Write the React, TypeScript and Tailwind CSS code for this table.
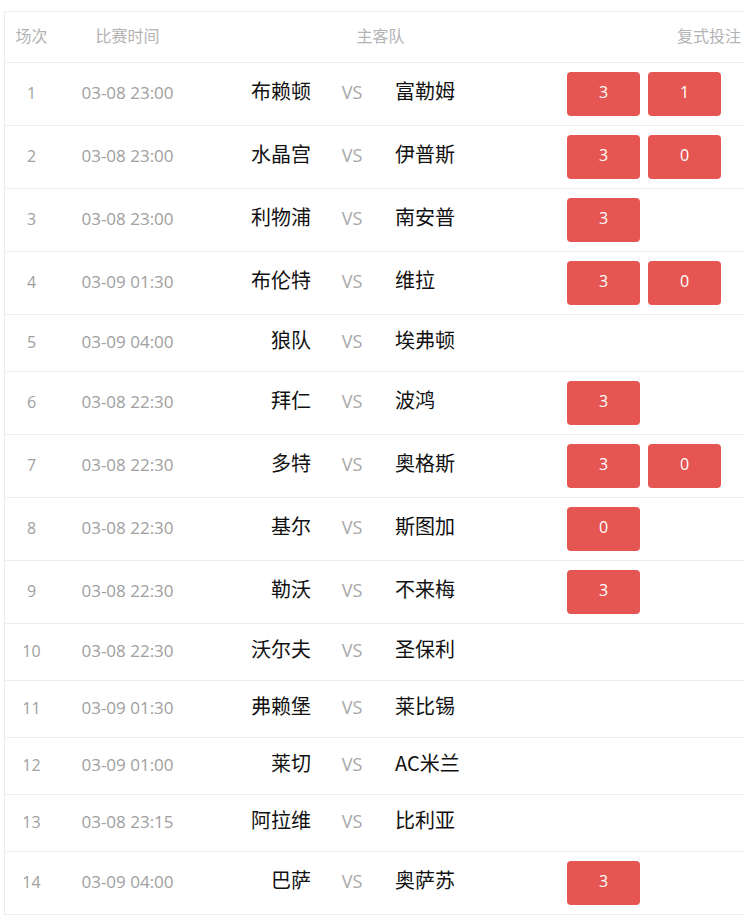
import React from "react";

type Match = { no: number; time: string; home: string; away: string; picks: string[] };

const MATCHES: Match[] = [
  { no: 1, time: "03-08 23:00", home: "布赖顿", away: "富勒姆", picks: ["3", "1"] },
  { no: 2, time: "03-08 23:00", home: "水晶宫", away: "伊普斯", picks: ["3", "0"] },
  { no: 3, time: "03-08 23:00", home: "利物浦", away: "南安普", picks: ["3"] },
  { no: 4, time: "03-09 01:30", home: "布伦特", away: "维拉", picks: ["3", "0"] },
  { no: 5, time: "03-09 04:00", home: "狼队", away: "埃弗顿", picks: [] },
  { no: 6, time: "03-08 22:30", home: "拜仁", away: "波鸿", picks: ["3"] },
  { no: 7, time: "03-08 22:30", home: "多特", away: "奥格斯", picks: ["3", "0"] },
  { no: 8, time: "03-08 22:30", home: "基尔", away: "斯图加", picks: ["0"] },
  { no: 9, time: "03-08 22:30", home: "勒沃", away: "不来梅", picks: ["3"] },
  { no: 10, time: "03-08 22:30", home: "沃尔夫", away: "圣保利", picks: [] },
  { no: 11, time: "03-09 01:30", home: "弗赖堡", away: "莱比锡", picks: [] },
  { no: 12, time: "03-09 01:00", home: "莱切", away: "AC米兰", picks: [] },
  { no: 13, time: "03-08 23:15", home: "阿拉维", away: "比利亚", picks: [] },
  { no: 14, time: "03-09 04:00", home: "巴萨", away: "奥萨苏", picks: ["3"] },
];

const latin = "font-['Open_Sans','Noto_Sans_CJK_SC',sans-serif]";
const cjk = "font-['Noto_Sans_CJK_SC','Noto_Sans',sans-serif]";

export default function App() {
  return (
    <div className="w-[745px] overflow-hidden bg-white pl-[4px] pt-[11px]">
      <div className="w-[858px] border border-[#ececec]">
        {/* header */}
        <div className={`flex h-[51px] items-center border-b border-[#ececec] pb-[4px] text-[16px] text-[#b3b3b3] ${cjk}`}>
          <div className="w-[53px] text-center">场次</div>
          <div className="w-[139px] text-center">比赛时间</div>
          <div className="w-[360px] pl-[7px] text-center">主客队</div>
          <div className="w-[304px] text-center">复式投注</div>
        </div>

        {MATCHES.map((m, i) => (
          <div
            key={m.no}
            className={`flex min-h-[57px] items-center ${i < MATCHES.length - 1 ? "border-b border-[#ececec]" : ""}`}
          >
            <div className={`w-[53px] pb-[2px] text-center text-[16px] text-[#a0a0a0] ${latin}`}>{m.no}</div>
            <div className={`w-[139px] pb-[2px] text-center text-[17px] text-[#a0a0a0] ${latin}`}>{m.time}</div>
            <div className={`w-[124px] pb-[6px] pr-[10px] text-right text-[20px] text-[#111] ${cjk}`}>{m.home}</div>
            <div className={`w-[62px] pb-[4px] text-center text-[18px] text-[#a8a8a8] ${latin}`}>VS</div>
            <div className={`w-[174px] pb-[6px] pl-[12px] text-left text-[20px] text-[#111] ${cjk}`}>{m.away}</div>
            <div className="flex w-[304px] gap-[8px] pl-[10px]">
              {m.picks.map((p, j) => (
                <div
                  key={j}
                  className={`my-[9px] flex h-[44px] w-[73px] items-center justify-center rounded-[4px] bg-[#e55652] pb-[4px] text-[16px] text-white ${latin}`}
                >
                  {p}
                </div>
              ))}
            </div>
          </div>
        ))}
      </div>
    </div>
  );
}
